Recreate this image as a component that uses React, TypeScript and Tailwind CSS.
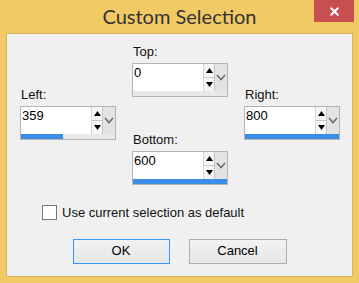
import { X } from 'lucide-react';

interface SpinFieldProps {
  label: string;
  value: number;
  max: number;
}

function SpinField({ label, value, max }: SpinFieldProps) {
  const pct = Math.round((value / max) * 100);
  return (
    <div className="flex flex-col w-[96px]">
      <div className="h-[19px] leading-[15px] pl-[1px] text-[13px] text-[#111]">{label}</div>
      <div className="h-[34px] border border-[#b4b4b4] bg-white flex flex-col">
        <div className="flex flex-1 min-h-0">
          {/* Text */}
          <div className="flex-1 pl-[1px] text-[13px] leading-[17px] text-black">{value}</div>
          {/* Spin arrows */}
          <div className="w-[11px] flex flex-col border-l border-[#d4d4d4]">
            <div className="flex-1 flex items-center justify-center border-b border-[#c8c8c8] bg-[#f6f6f6]">
              <svg width="7" height="5" viewBox="0 0 7 5">
                <path d="M0 5 L3.5 0 L7 5 Z" fill="#000" />
              </svg>
            </div>
            <div className="flex-1 flex items-center justify-center bg-[#f6f6f6]">
              <svg width="7" height="5" viewBox="0 0 7 5">
                <path d="M0 0 L3.5 5 L7 0 Z" fill="#000" />
              </svg>
            </div>
          </div>
          {/* Dropdown chevron */}
          <div className="w-[13px] flex items-center justify-center bg-[#e3e3e3] border-l border-[#c4c4c4]">
            <svg width="10" height="7" viewBox="0 0 10 7">
              <path d="M1 1 L5 5.5 L9 1" fill="none" stroke="#6b6b6b" strokeWidth="1.6" />
            </svg>
          </div>
        </div>
        {/* Progress */}
        <div className="h-[5px] bg-[#e8e8e8]">
          <div className="h-full bg-[#3b8de6]" style={{ width: `${pct}%` }} />
        </div>
      </div>
    </div>
  );
}

export default function App() {
  return (
    <div
      className="w-[359px] h-[283px] bg-[#f1c965] flex flex-col"
      style={{ fontFamily: '"Liberation Sans", Arial, sans-serif' }}
    >
      {/* Title bar */}
      <div className="relative h-[33px] shrink-0 flex items-center justify-center">
        <span className="text-[20px] text-[#333] font-['Lato',sans-serif] -mt-[2px]">Custom Selection</span>
        <div className="absolute top-0 right-[5px] w-[40px] h-[22px] bg-[#c74f4f] flex items-center justify-center">
          <X className="w-[13px] h-[13px] text-white" strokeWidth={3.5} />
        </div>
      </div>

      {/* Client area */}
      <div className="mx-[6px] h-[244px] bg-[#f0f0f0] border border-[#d8b45c] flex flex-col">
        <div className="flex gap-[16px] pl-[13px] pt-[10px]">
          <div className="pt-[43px]">
            <SpinField label="Left:" value={359} max={800} />
          </div>
          <div className="flex flex-col gap-[35px]">
            <SpinField label="Top:" value={0} max={600} />
            <SpinField label="Bottom:" value={600} max={600} />
          </div>
          <div className="pt-[43px]">
            <SpinField label="Right:" value={800} max={800} />
          </div>
        </div>

        {/* Checkbox */}
        <label className="flex items-center gap-[5px] pl-[35px] mt-[18px] text-[13px] text-[#111]">
          <span className="w-[15px] h-[15px] border border-[#777] bg-white" />
          Use current selection as default
        </label>

        {/* Buttons */}
        <div className="flex justify-center gap-[19px] mt-[16px]">
          <button className="w-[97px] h-[25px] border border-[#3399ff] bg-gradient-to-b from-[#f2f2f2] to-[#e6e6e6] text-[13px] text-black">
            OK
          </button>
          <button className="w-[98px] h-[25px] border border-[#adadad] bg-gradient-to-b from-[#f2f2f2] to-[#e6e6e6] text-[13px] text-black">
            Cancel
          </button>
        </div>
      </div>
    </div>
  );
}
